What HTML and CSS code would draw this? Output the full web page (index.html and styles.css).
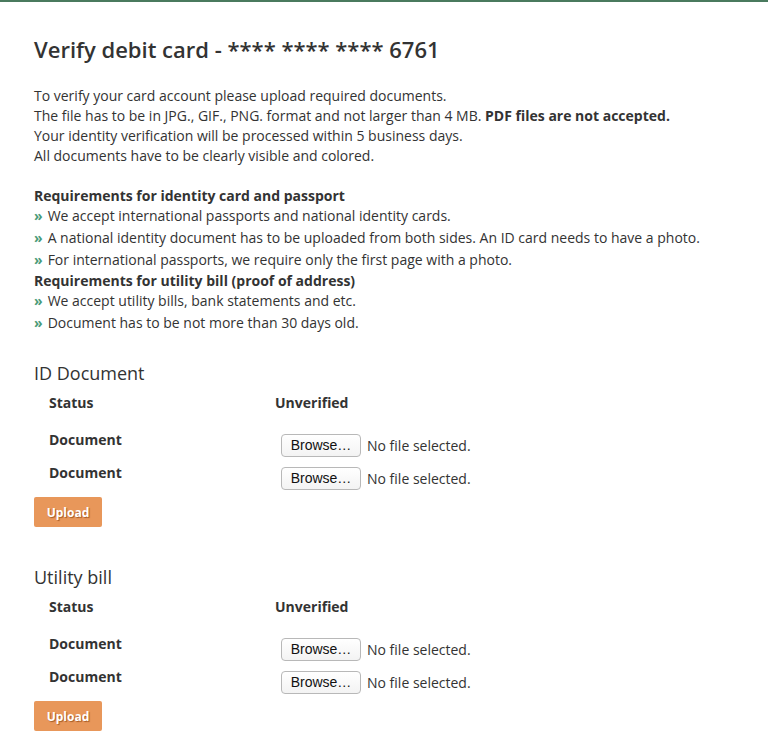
FILE: index.html
```html
<!DOCTYPE html>
<html lang="en">
<head>
<meta charset="utf-8"/>
<title>Verify debit card</title>
<link rel="stylesheet" href="styles.css">
</head>
<body>
<div id="topbar"></div>
<div id="base">
    <h1>Verify debit card - **** **** **** 6761</h1>
    <p class="intro">
        To verify your card account please upload required documents.<br/>
        The file has to be in JPG., GIF., PNG. format and not larger than 4 MB. <b>PDF files are not accepted.</b><br/>
        Your identity verification will be processed within 5 business days.<br/>
        All documents have to be clearly visible and colored.
    </p>
    <div class="req">
        <h3>Requirements for identity card and passport</h3>
        <ul>
            <li>We accept international passports and national identity cards.</li>
            <li>A national identity document has to be uploaded from both sides. An ID card needs to have a photo.</li>
            <li>For international passports, we require only the first page with a photo.</li>
        </ul>
        <h3>Requirements for utility bill (proof of address)</h3>
        <ul>
            <li>We accept utility bills, bank statements and etc.</li>
            <li>Document has to be not more than 30 days old.</li>
        </ul>
    </div>

    <div class="docsection">
        <h2>ID Document</h2>
        <div class="row status"><div class="label">Status</div><div class="value">Unverified</div></div>
        <div class="row"><div class="label">Document</div><div class="value"><span class="browse">Browse…</span><span class="nofile">No file selected.</span></div></div>
        <div class="row"><div class="label">Document</div><div class="value"><span class="browse">Browse…</span><span class="nofile">No file selected.</span></div></div>
        <button class="upload">Upload</button>
    </div>

    <div class="docsection">
        <h2>Utility bill</h2>
        <div class="row status"><div class="label">Status</div><div class="value">Unverified</div></div>
        <div class="row"><div class="label">Document</div><div class="value"><span class="browse">Browse…</span><span class="nofile">No file selected.</span></div></div>
        <div class="row"><div class="label">Document</div><div class="value"><span class="browse">Browse…</span><span class="nofile">No file selected.</span></div></div>
        <button class="upload">Upload</button>
    </div>
</div>
</body>
</html>
```

FILE: styles.css
```css
html {
    font-family: 'Open Sans', sans-serif;
    padding:0;
    margin:0;
}
body {
    padding:0;
    margin:0;
    background:#fff;
    color:#333;
    font-size:14px;
}
#topbar {
    height:2px;
    background:#4a7a5e;
}
#base {
    padding:0 34px;
}
h1 {
    font-size:22px;
    font-weight:600;
    line-height:30px;
    margin:32px 0 22px 0;
    color:#333;
}
.intro {
    line-height:20px;
    margin:0 0 20px 0;
}
.intro b {
    font-weight:700;
}
.req h3 {
    font-size:14px;
    font-weight:700;
    line-height:19px;
    margin:0;
}
.req ul {
    list-style:none;
    padding:0;
    margin:0;
}
.req li {
    line-height:22px;
}
.req li:before {
    content:"»";
    color:#4a9a78;
    font-weight:700;
    margin-right:5px;
}
.docsection {
    margin-top:27px;
}
.docsection + .docsection {
    margin-top:38px;
}
.docsection h2 {
    font-size:18px;
    font-weight:400;
    line-height:24px;
    margin:0 0 8px 0;
}
.row {
    display:flex;
    height:33px;
}
.row.status {
    height:37px;
}
.label {
    width:226px;
    padding-left:15px;
    font-weight:700;
    line-height:20px;
}
.value {
    font-weight:700;
    line-height:20px;
    display:flex;
    align-items:flex-start;
}
.row:not(.status) .value {
    padding-top:4px;
    align-items:center;
    align-self:flex-start;
    font-weight:400;
}
.browse {
    display:inline-block;
    box-sizing:border-box;
    width:80px;
    height:23px;
    line-height:21px;
    margin-left:6px;
    border:1px solid #b8b8b8;
    border-radius:4px;
    background:linear-gradient(#fff, #f3f3f3);
    font-family:'Liberation Sans', sans-serif;
    font-size:14px;
    text-align:center;
    color:#111;
}
.nofile {
    margin-left:6px;
    color:#333;
}
.upload {
    display:block;
    width:68px;
    height:30px;
    margin-top:1px;
    border:none;
    border-radius:2px;
    background:#e8975a;
    color:#fff;
    font-family:'Open Sans', sans-serif;
    font-weight:700;
    font-size:12px;
    text-shadow:1px 1px 1px rgba(120,50,0,0.6);
}
```
